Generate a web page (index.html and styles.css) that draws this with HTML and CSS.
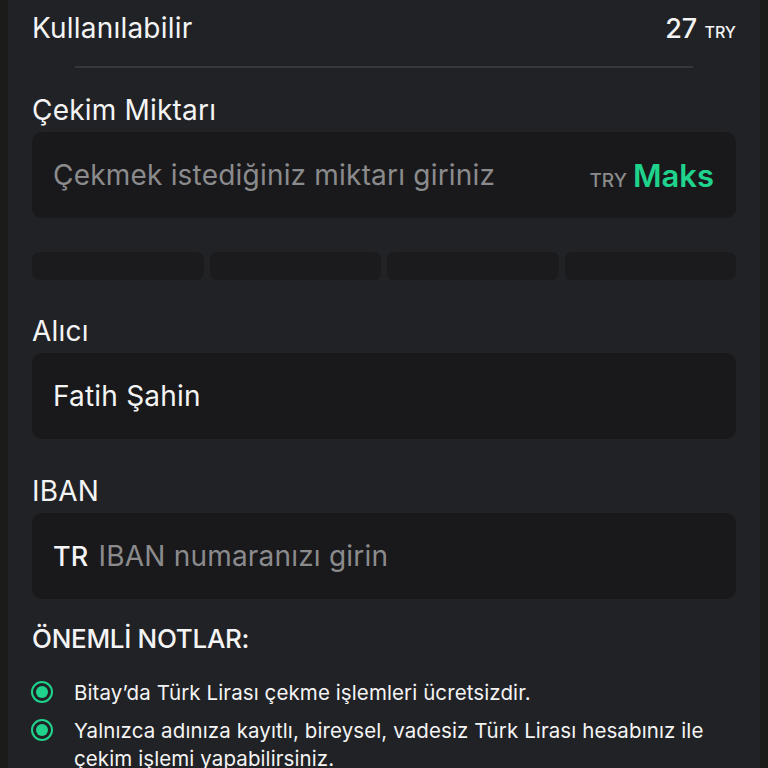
FILE: index.html
```html
<!DOCTYPE html>
<html lang="tr">
<head>
<meta charset="UTF-8">
<meta name="viewport" content="width=device-width, initial-scale=1.0">
<title>TRY Çekim</title>
<link rel="stylesheet" href="styles.css">
</head>
<body>
<div class="card">
<div class="balance-row">
<span>Kullanılabilir</span>
<span class="amount">27 <small>TRY</small></span>
</div>
<div class="divider"></div>

<div class="field-label">Çekim Miktarı</div>
<div class="field">
<span class="placeholder">Çekmek istediğiniz miktarı giriniz</span>
<span class="suffix"><span class="currency">TRY</span><span class="max">Maks</span></span>
</div>
<div class="quick">
<div></div>
<div></div>
<div></div>
<div></div>
</div>

<div class="field-label">Alıcı</div>
<div class="field">
<span class="value">Fatih Şahin</span>
</div>

<div class="field-label">IBAN</div>
<div class="field">
<span class="value prefix">TR</span><span class="placeholder">IBAN numaranızı girin</span>
</div>

<div class="notes-title">ÖNEMLİ NOTLAR:</div>
<ul class="notes">
<li><span class="dot"></span><span>Bitay’da Türk Lirası çekme işlemleri ücretsizdir.</span></li>
<li><span class="dot"></span><span>Yalnızca adınıza kayıtlı, bireysel, vadesiz Türk Lirası hesabınız ile çekim işlemi yapabilirsiniz.</span></li>
</ul>
</div>
</body>
</html>
```

FILE: styles.css
```css
body {
margin: 0;
background-color: #1b1b19;
font-family: "Inter", "Noto Sans", sans-serif;
color: #f4f4f4;
overflow: hidden;
}
.card {
margin: 0 8px;
height: 768px;
background-color: #212226;
padding: 0 24px;
}
.balance-row {
display: flex;
justify-content: space-between;
align-items: center;
height: 56px;
font-size: 28px;
letter-spacing: 0.2px;
}
.amount {
font-weight: 500;
font-size: 27px;
letter-spacing: 0;
}
.amount small {
font-size: 16px;
font-weight: 500;
}
.divider {
height: 2px;
margin: 10px 43px 0;
background-color: #36373b;
}
.field-label {
font-size: 28px;
letter-spacing: 0.2px;
line-height: 32px;
margin-top: 26px;
}
.field {
display: flex;
align-items: center;
height: 86px;
margin-top: 7px;
padding: 0 22px 0 21px;
background-color: #19191b;
border-radius: 10px;
font-size: 28px;
letter-spacing: 0.2px;
}
.placeholder {
color: #8b8b8d;
}
.value {
color: #f4f4f4;
}
.prefix {
font-weight: 500;
font-size: 27px;
margin-right: 10px;
}
.suffix {
margin-left: auto;
display: flex;
align-items: baseline;
gap: 6px;
letter-spacing: 0;
}
.currency {
font-size: 19px;
font-weight: 500;
color: #8b8b8d;
}
.max {
font-size: 31px;
font-weight: 600;
color: #1fd38c;
}
.quick {
display: grid;
grid-template-columns: repeat(4, 1fr);
gap: 6px;
margin-top: 34px;
}
.quick div {
height: 28px;
background-color: #1b1b1e;
border-radius: 7px;
}
.quick + .field-label {
margin-top: 35px;
}
.field + .field-label {
margin-top: 36px;
}
.field-label + .field {
margin-top: 6px;
}
.notes-title {
font-size: 26px;
font-weight: 500;
letter-spacing: -0.3px;
line-height: 32px;
margin-top: 24px;
}
.notes {
list-style: none;
margin: 24px 0 0;
padding: 0;
}
.notes li {
display: flex;
align-items: flex-start;
gap: 21px;
font-size: 20.5px;
letter-spacing: 0.1px;
line-height: 28px;
margin-bottom: 10px;
}
.dot {
flex: none;
width: 18px;
height: 18px;
margin: 2px 0 0 -1px;
border: 2px solid #1fd38c;
border-radius: 50%;
position: relative;
}
.dot::after {
content: "";
position: absolute;
left: 3px;
top: 3px;
width: 12px;
height: 12px;
border-radius: 50%;
background-color: #1fd38c;
}
```
